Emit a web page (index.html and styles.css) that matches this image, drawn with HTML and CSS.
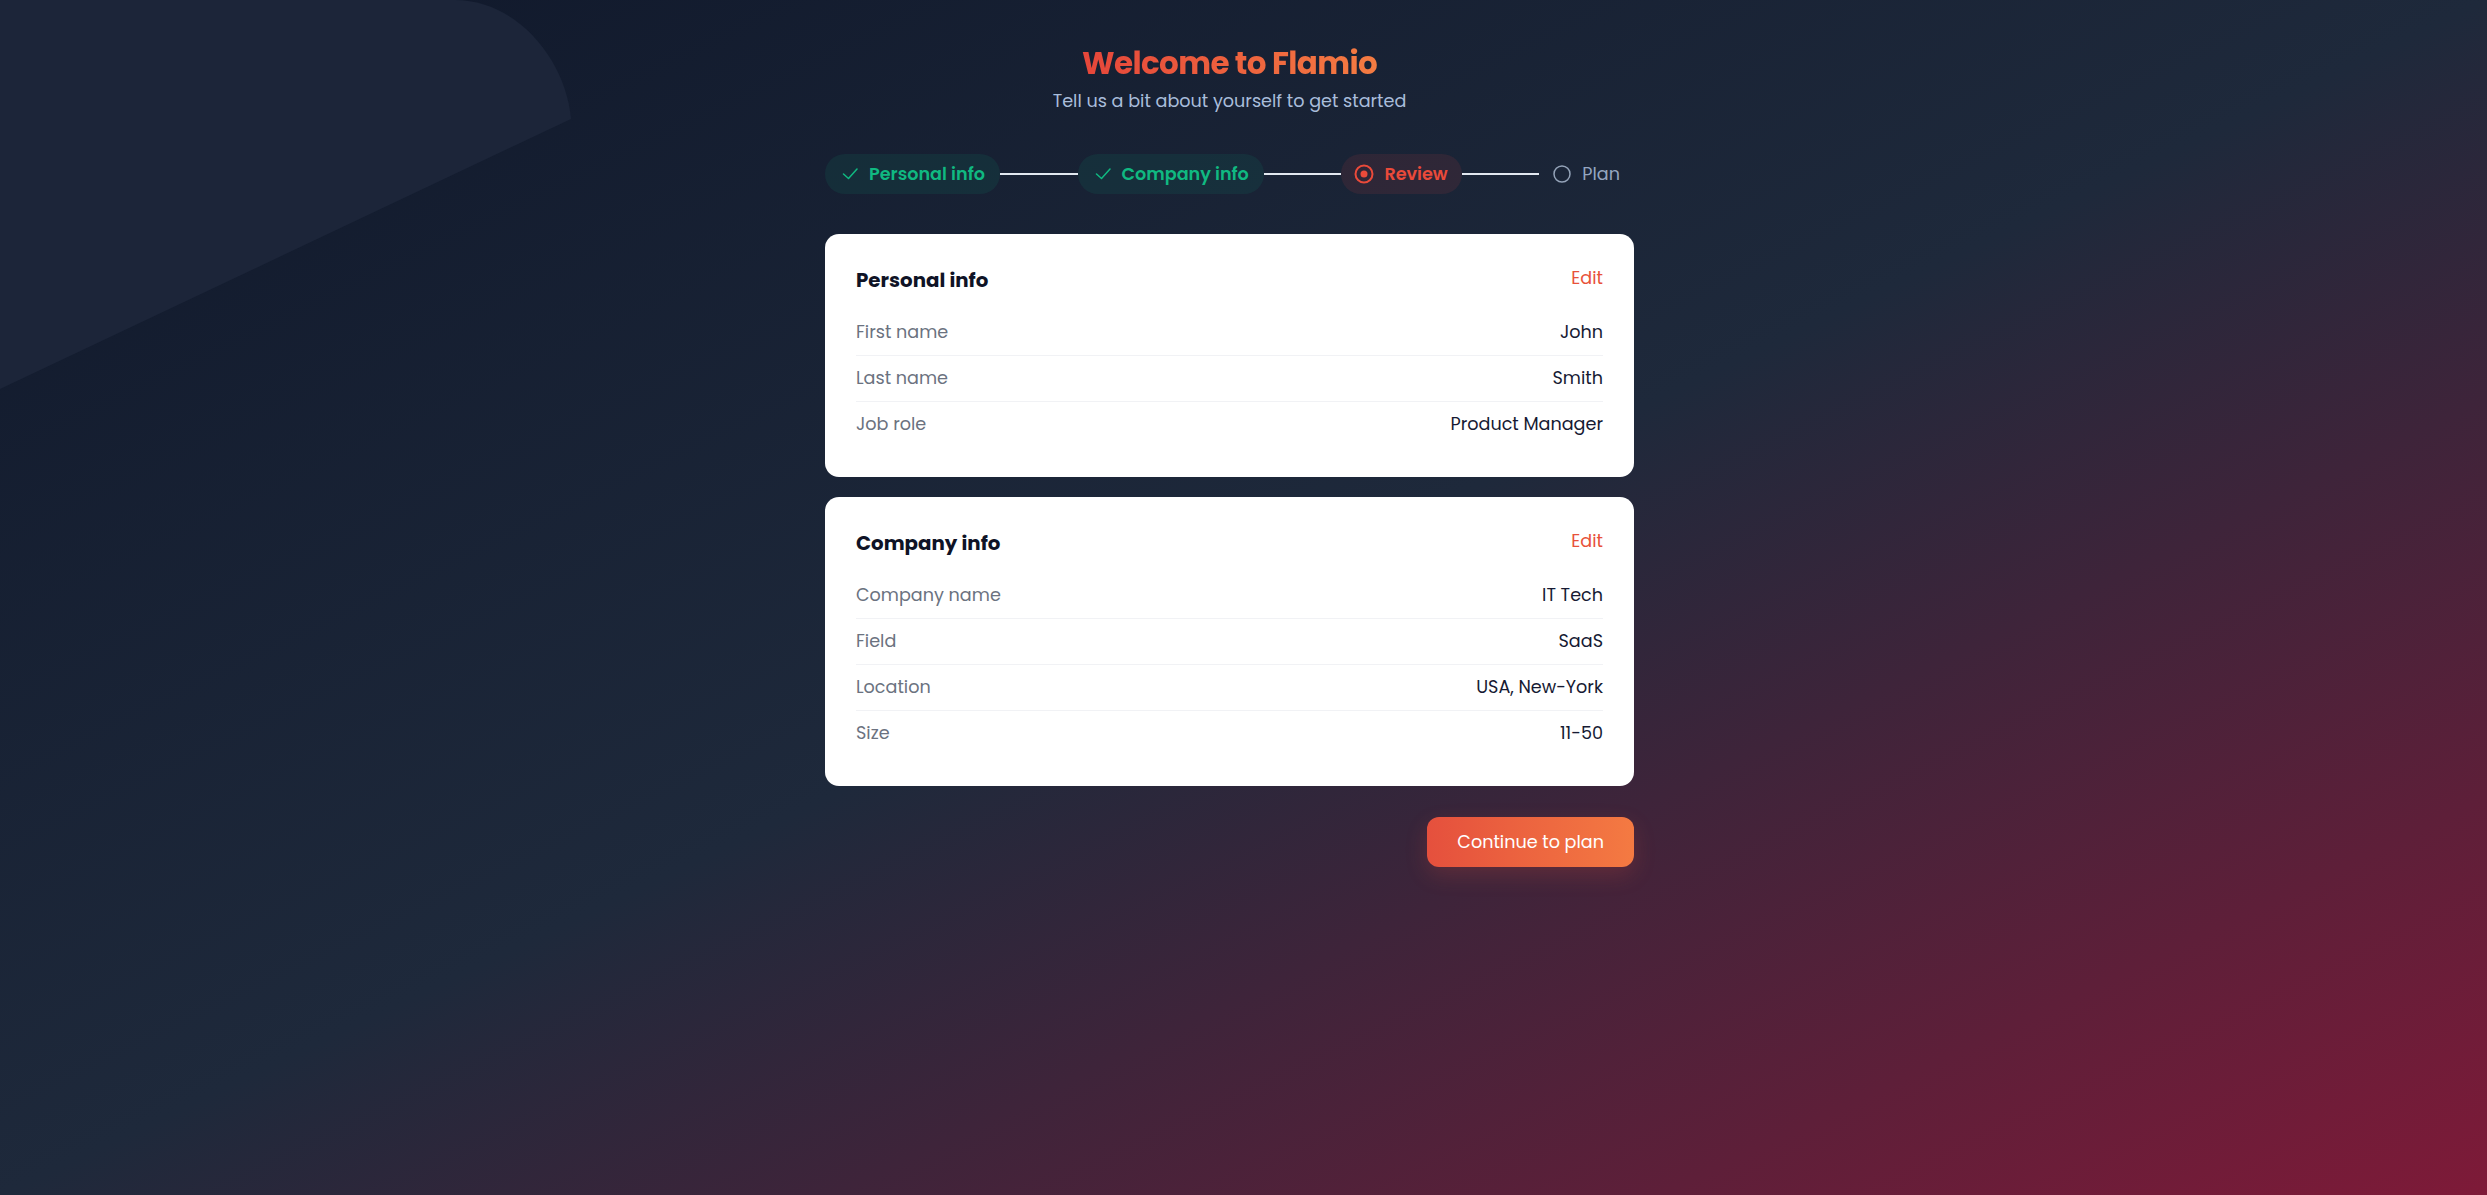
FILE: index.html
```html
<!DOCTYPE html>
<html lang="en">
<head>
<meta charset="utf-8">
<title>Flamio – Onboarding</title>
<link rel="stylesheet" href="styles.css">
</head>
<body>
  <svg class="bg-shape" width="600" height="400" viewBox="0 0 600 400" aria-hidden="true">
    <path d="M0 0H455C517 0 566 60 571 119L0 389Z"/>
  </svg>

  <main class="onboarding">
    <header class="intro">
      <h1 class="intro-title">Welcome to Flamio</h1>
      <p class="intro-sub">Tell us a bit about yourself to get started</p>
    </header>

    <ol class="stepper">
      <li class="step step-done">
        <svg class="step-icon" width="16" height="16" viewBox="0 0 16 16"><path d="M1.5 8L6.5 12.5L15 3"/></svg>
        <span>Personal info</span>
      </li>
      <li class="step-line"></li>
      <li class="step step-done">
        <svg class="step-icon" width="16" height="16" viewBox="0 0 16 16"><path d="M1.5 8L6.5 12.5L15 3"/></svg>
        <span>Company info</span>
      </li>
      <li class="step-line"></li>
      <li class="step step-current">
        <svg class="step-icon" width="20" height="20" viewBox="0 0 20 20"><circle class="ring" cx="10" cy="10" r="8.5"/><circle class="dot" cx="10" cy="10" r="3.5"/></svg>
        <span>Review</span>
      </li>
      <li class="step-line"></li>
      <li class="step step-todo">
        <svg class="step-icon" width="18" height="18" viewBox="0 0 18 18"><circle cx="9" cy="9" r="8"/></svg>
        <span>Plan</span>
      </li>
    </ol>

    <section class="card">
      <div class="card-head">
        <h2 class="card-title">Personal info</h2>
        <a class="card-edit" href="#">Edit</a>
      </div>
      <dl class="info-list">
        <div class="info-row"><dt>First name</dt><dd>John</dd></div>
        <div class="info-row"><dt>Last name</dt><dd>Smith</dd></div>
        <div class="info-row"><dt>Job role</dt><dd>Product Manager</dd></div>
      </dl>
    </section>

    <section class="card">
      <div class="card-head">
        <h2 class="card-title">Company info</h2>
        <a class="card-edit" href="#">Edit</a>
      </div>
      <dl class="info-list">
        <div class="info-row"><dt>Company name</dt><dd>IT Tech</dd></div>
        <div class="info-row"><dt>Field</dt><dd>SaaS</dd></div>
        <div class="info-row"><dt>Location</dt><dd>USA, New-York</dd></div>
        <div class="info-row"><dt>Size</dt><dd>11-50</dd></div>
      </dl>
    </section>

    <div class="actions">
      <button class="btn-primary" type="button">Continue to plan</button>
    </div>
  </main>
</body>
</html>
```

FILE: styles.css
```css
* {
  box-sizing: border-box;
}

html,
body {
  margin: 0;
  min-height: 100%;
}

body {
  position: relative;
  min-height: 100vh;
  font-family: "Poppins", "Inter", "Open Sans", sans-serif;
  color: #0f172a;
  background: linear-gradient(to bottom right, #0f172a 0%, #1e293b 50%, #7e1a38 100%);
  overflow: hidden;
}

/* soft slab in the upper-left corner of the backdrop */
.bg-shape {
  position: absolute;
  top: 0;
  left: 0;
  pointer-events: none;
}

.bg-shape path {
  fill: #1c2539;
}

.onboarding {
  position: relative;
  width: 809px;
  margin: 0 auto;
  padding: 43px 0 60px;
  left: -14px;
  display: flex;
  flex-direction: column;
}

/* intro */
.intro {
  text-align: center;
}

.intro-title {
  margin: 0 0 5px;
  font-size: 31px;
  line-height: 40px;
  font-weight: 700;
  letter-spacing: -0.02em;
  background: linear-gradient(90deg, #e6463a 0%, #f47c42 100%);
  -webkit-background-clip: text;
  background-clip: text;
  color: transparent;
  display: inline-block;
}

.intro-sub {
  margin: 0;
  font-size: 17.6px;
  line-height: 26px;
  color: #a9bddb;
}

/* stepper */
.stepper {
  list-style: none;
  margin: 40px 0 40px;
  padding: 0;
  display: flex;
  align-items: center;
}

.step {
  height: 40px;
  padding: 0 15px 0 17px;
  border-radius: 20px;
  display: flex;
  align-items: center;
  gap: 11px;
  font-size: 17.6px;
  line-height: 26px;
  white-space: nowrap;
}

.step-icon {
  flex: none;
  fill: none;
}

.step-done {
  background: rgba(16, 185, 129, 0.09);
  color: #10b981;
  font-weight: 600;
}

.step-done .step-icon path {
  stroke: #10b981;
  stroke-width: 1.5;
  stroke-linecap: round;
  stroke-linejoin: round;
}

.step-current {
  padding-left: 13px;
  padding-right: 14px;
  gap: 10px;
  background: rgba(239, 68, 68, 0.1);
  color: #ea4a3a;
  font-weight: 600;
}

.step-current .ring {
  stroke: #ea4a3a;
  stroke-width: 2;
}

.step-current .dot {
  fill: #ea4a3a;
}

.step-todo {
  padding: 0 14px;
  gap: 11px;
  color: #94a6c0;
  font-weight: 400;
}

.step-todo .step-icon circle {
  stroke: #94a3b8;
  stroke-width: 1.5;
}

.step-line {
  flex: 1;
  height: 2px;
  background: #e2e8f0;
}

/* summary cards */
.card {
  background: #ffffff;
  border-radius: 14px;
  padding: 31px 31px 30px;
}

.card + .card {
  margin-top: 20px;
}

.card-head {
  display: flex;
  justify-content: space-between;
  align-items: flex-start;
  margin-bottom: 14px;
}

.card-title {
  margin: 0;
  font-size: 19.8px;
  line-height: 31px;
  font-weight: 700;
  color: #0f1326;
}

.card-edit {
  font-size: 17.6px;
  line-height: 27px;
  color: #e8513a;
  text-decoration: none;
}

.info-list {
  margin: 0;
}

.info-row {
  display: flex;
  justify-content: space-between;
  padding: 9px 0;
  font-size: 17.6px;
  line-height: 27px;
  border-bottom: 1px solid #f1f2f5;
}

.info-row:last-child {
  border-bottom: none;
}

.info-row dt {
  color: #6b7280;
}

.info-row dd {
  margin: 0;
  color: #161a33;
}

/* footer action */
.actions {
  display: flex;
  justify-content: flex-end;
  margin-top: 31px;
}

.btn-primary {
  height: 50px;
  padding: 0 30px;
  border: none;
  border-radius: 12px;
  font-family: inherit;
  font-size: 17.6px;
  font-weight: 400;
  color: #ffffff;
  background: linear-gradient(90deg, #e5503d 0%, #f47a42 100%);
  box-shadow: 0 8px 22px rgba(232, 80, 58, 0.2);
  cursor: pointer;
}
```
